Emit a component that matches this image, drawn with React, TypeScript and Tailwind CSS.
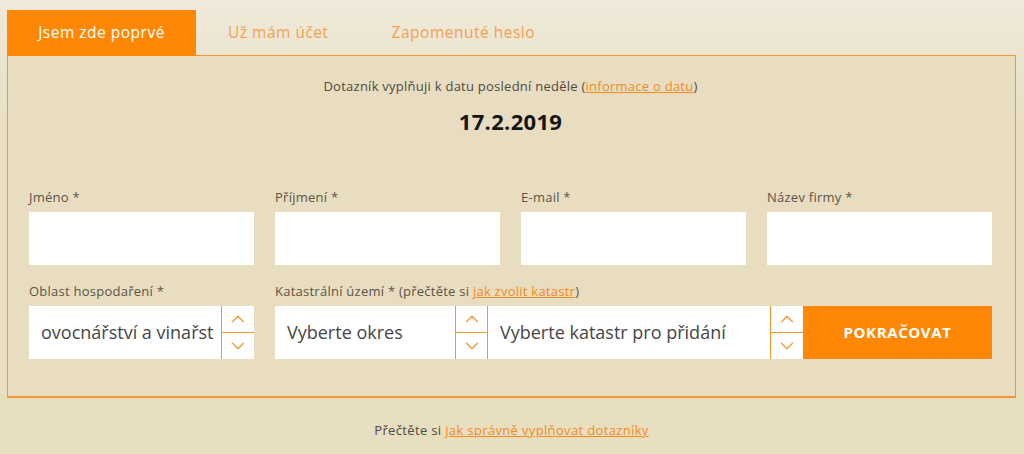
import { ChevronUp, ChevronDown } from "lucide-react";

const font = "font-['Open_Sans','Lato',sans-serif]";
const small = "text-[13px] leading-[16px] tracking-[0.25px]";

function Spinner({ right = false }: { right?: boolean }) {
  return (
    <div
      className={`flex w-[33px] shrink-0 flex-col border-l border-[#f5962e] bg-white ${
        right ? "border-r" : ""
      }`}
    >
      <div className="flex flex-1 items-center justify-center border-b border-[#f5962e]">
        <ChevronUp size={22} strokeWidth={1.3} className="text-[#f5962e]" />
      </div>
      <div className="flex flex-1 items-center justify-center">
        <ChevronDown size={22} strokeWidth={1.3} className="text-[#f5962e]" />
      </div>
    </div>
  );
}

function Select({ value, spinRight = false, className = "" }: { value: string; spinRight?: boolean; className?: string }) {
  return (
    <div className={`flex h-[53px] bg-white ${className}`}>
      <div className="flex min-w-0 flex-1 items-center whitespace-nowrap pl-[12px] text-[18px] text-[#464646]">
        {value}
      </div>
      <Spinner right={spinRight} />
    </div>
  );
}

function Field({ label }: { label: string }) {
  return (
    <div className="flex flex-col">
      <label className={`mb-[7px] text-[#5b5446] ${small}`}>{label}</label>
      <input className="h-[53px] w-full bg-white outline-none" />
    </div>
  );
}

export default function App() {
  return (
    <div className={`min-h-[454px] w-[1024px] bg-[linear-gradient(#efeadb_0px,#ebe4cf_60px,#e8dec0_140px)] pt-[10px] ${font}`}>
      <div className="ml-[7px] w-[1009px]">
        {/* Tabs */}
        <div className="relative z-10 -mb-px flex h-[46px] items-stretch">
          <div className="flex w-[189px] items-center justify-center bg-[#fe8805] text-[15.5px] tracking-[0.5px] text-white">
            Jsem zde poprvé
          </div>
          <div className="flex items-center px-[32px] text-[15.5px] tracking-[0.5px] text-[#f3a050]">Už mám účet</div>
          <div className="flex items-center px-[31px] text-[15.5px] tracking-[0.5px] text-[#f3a050]">Zapomenuté heslo</div>
        </div>

        {/* Panel */}
        <div className="h-[343px] border border-b-2 border-[#f5962e] bg-[#e8ddc0] pl-[21px] pr-[23px] pt-[22px]">
          <p className={`text-center text-[#4e4a42] ${small}`}>
            Dotazník vyplňuji k datu poslední neděle (
            <a className="text-[#f58a1f] underline">informace o datu</a>)
          </p>
          <p className="mt-[14px] text-center text-[22px] font-bold leading-[26px] tracking-[0.3px] text-[#151515]">
            17.2.2019
          </p>

          <div className="mt-[55px] grid grid-cols-4 gap-x-[21px]">
            <Field label="Jméno *" />
            <Field label="Příjmení *" />
            <Field label="E-mail *" />
            <Field label="Název firmy *" />
          </div>

          <div className="mt-[18px] flex gap-x-[21px]">
            <div className="flex w-[225px] shrink-0 flex-col">
              <label className={`mb-[7px] text-[#5b5446] ${small}`}>Oblast hospodaření *</label>
              <Select value="ovocnářství a vinařst" />
            </div>
            <div className="flex flex-1 flex-col">
              <label className={`mb-[7px] text-[#5b5446] ${small}`}>
                Katastrální území * (přečtěte si <a className="text-[#f58a1f] underline">jak zvolit katastr</a>)
              </label>
              <div className="flex">
                <Select value="Vyberte okres" spinRight className="w-[213px]" />
                <Select value="Vyberte katastr pro přidání" className="w-[315px]" />
                <button className="flex h-[53px] flex-1 items-center justify-center bg-[#fe8805] text-[15px] font-bold tracking-[0.6px] text-white">
                  POKRAČOVAT
                </button>
              </div>
            </div>
          </div>
        </div>

        {/* Footer */}
        <p className="mt-[24px] text-center text-[13px] leading-[16px] tracking-[0.35px] text-[#4e4a42]">
          Přečtěte si <a className="text-[#f58a1f] underline">jak správně vyplňovat dotazníky</a>
        </p>
      </div>
    </div>
  );
}
